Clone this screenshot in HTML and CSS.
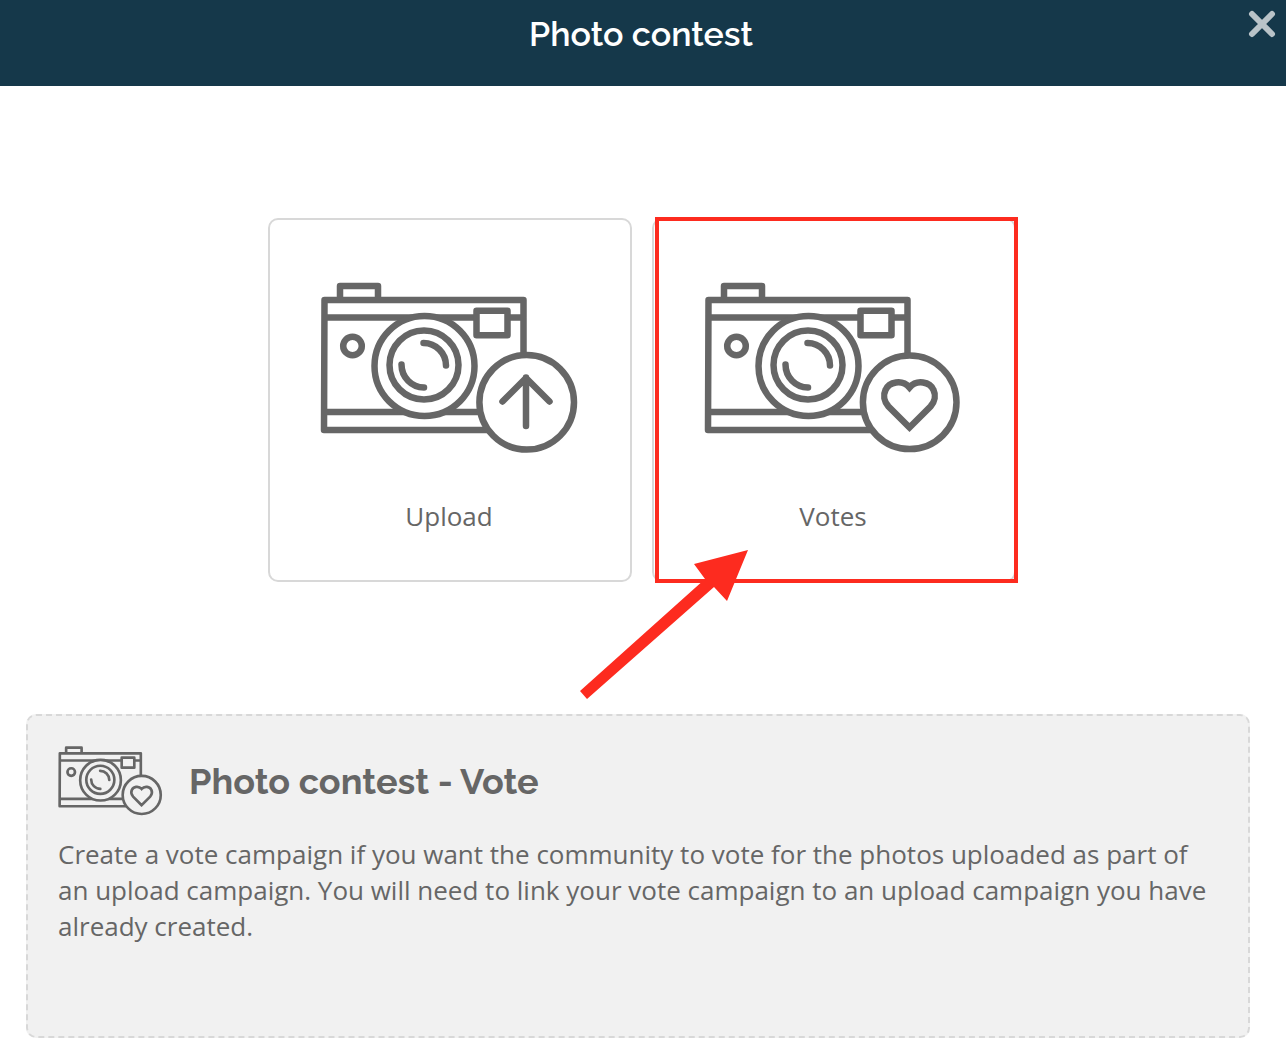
FILE: index.html
```html
<!DOCTYPE html>
<html lang="en">
<head>
    <meta charset="UTF-8">
    <meta name="viewport" content="width=device-width, initial-scale=1">
    <title>Photo contest</title>
    <link rel="stylesheet" href="styles.css">
</head>
<body>
    <!-- Shared icon shapes -->
    <svg class="sprite" aria-hidden="true">
        <symbol id="camera" viewBox="0 0 258 172">
            <path d="M4.500 18H203.500V148H4Z M4.500 35.500H203.500 M4.500 130H203.500 M20 18V4H58V18"/>
            <circle cx="104.500" cy="84" r="50" class="fill"/>
            <circle cx="104" cy="83" r="34.500"/>
            <path d="M103.500 61A22.500 22.500 0 0 1 126 83.500 M81.500 82.500A22.500 23 0 0 0 104 105.500"/>
            <path class="fill" d="M156.500 28.700H187.500V53.200H156.500Z"/>
            <circle cx="32.500" cy="64" r="9.300"/>
        </symbol>
        <symbol id="camera-upload" viewBox="0 0 258 172">
            <use href="#camera"/>
            <circle cx="206.700" cy="120.300" r="47.300" class="fill"/>
            <path d="M206 144V95.500 M182.500 119.500L206 96L229.500 119.500"/>
        </symbol>
        <symbol id="camera-vote" viewBox="0 0 258 172">
            <use href="#camera"/>
            <circle cx="205.700" cy="120.300" r="46.800" class="fill"/>
            <path class="heart" d="M205.500 145.500L184.500 124.500C180 119.500 179 113 181.500 108C185 100 198 97 205.500 105.500C213 97 226 100 229.500 108C232 113 231 119.500 226.500 124.500Z"/>
        </symbol>
    </svg>

    <header class="header">
        <h1>Photo contest</h1>
        <button type="button" class="close" aria-label="Close">
            <svg viewBox="0 0 28 28"><path d="M4 4L24 24M24 4L4 24"/></svg>
        </button>
    </header>

    <main>
        <div class="choices">
            <button type="button" class="card">
                <svg class="icon"><use href="#camera-upload"/></svg>
                <span>Upload</span>
            </button>
            <div class="highlight">
                <button type="button" class="card">
                    <svg class="icon"><use href="#camera-vote"/></svg>
                    <span>Votes</span>
                </button>
                <svg class="arrow" viewBox="0 0 170 152" aria-hidden="true">
                    <path d="M169 1L115 15L126 30L1 142L8 150L135 38L148 52Z"/>
                </svg>
            </div>
        </div>

        <section class="info">
            <div class="info-title">
                <svg class="icon small"><use href="#camera-vote"/></svg>
                <h2>Photo contest - Vote</h2>
            </div>
            <p>Create a vote campaign if you want the community to vote for the photos uploaded as part of an upload campaign. You will need to link your vote campaign to an upload campaign you have already created.</p>
        </section>
    </main>
</body>
</html>
```
FILE: styles.css
```css
* {
    box-sizing: border-box;
}
body {
    margin: 0;
    background-color: #fff;
    color: #666;
    font-family: "Open Sans", sans-serif;
    font-size: 26px;
    line-height: 36px;
}
h1, h2 {
    margin: 0;
    font-family: Raleway, Lato, sans-serif;
    font-size: 36px;
    line-height: 48px;
}
button {
    font: inherit;
    color: inherit;
    cursor: pointer;
}
.sprite {
    position: absolute;
    width: 0;
    height: 0;
}

/* Header */
.header {
    position: relative;
    padding: 10px 4px 28px 0;
    background-color: #15384a;
    color: #fff;
    text-align: center;
}
.header h1 {
    font-size: 34px;
    font-weight: 600;
}
.close {
    position: absolute;
    top: 10px;
    right: 10px;
    padding: 0;
    border: 0;
    background: none;
}
.close svg {
    display: block;
    width: 28px;
    height: 28px;
    stroke: #b9c3c8;
    stroke-width: 6;
    stroke-linecap: round;
}

/* Campaign type choices */
main {
    padding: 132px 36px 14px 26px;
}
.choices {
    display: flex;
    justify-content: center;
    gap: 20px;
    margin: 0 0 132px 8px;
}
.card {
    display: flex;
    flex-direction: column;
    align-items: center;
    width: 364px;
    height: 364px;
    padding: 62px 2px 0 0;
    border: 2px solid #d8d8d8;
    border-radius: 10px;
    background-color: #fff;
}
.card span {
    margin-top: 44px;
}
.highlight {
    position: relative;
}
.highlight::after {
    content: "";
    position: absolute;
    inset: -1px -2px -1px 3px;
    border: 4px solid #fd2b1f;
    pointer-events: none;
}
.arrow {
    position: absolute;
    top: 331px;
    left: -73px;
    width: 170px;
    height: 152px;
    fill: #fd2b1f;
    pointer-events: none;
}

/* Icons */
.icon {
    --surface: #fff;
    width: 258px;
    height: 172px;
    fill: none;
    stroke: #666;
    stroke-width: 6.5;
    stroke-linecap: round;
    stroke-linejoin: round;
}
.icon.small {
    --surface: #f1f1f1;
    width: 105px;
    height: 70px;
}
.fill {
    fill: var(--surface);
}
.heart {
    stroke-linejoin: miter;
}

/* Description */
.info {
    min-height: 324px;
    padding: 30px;
    border: 2px dashed #d8d8d8;
    border-radius: 10px;
    background-color: #f1f1f1;
}
.info-title {
    display: flex;
    align-items: center;
    gap: 26px;
}
.info p {
    margin: 20px 0 0;
}
```
